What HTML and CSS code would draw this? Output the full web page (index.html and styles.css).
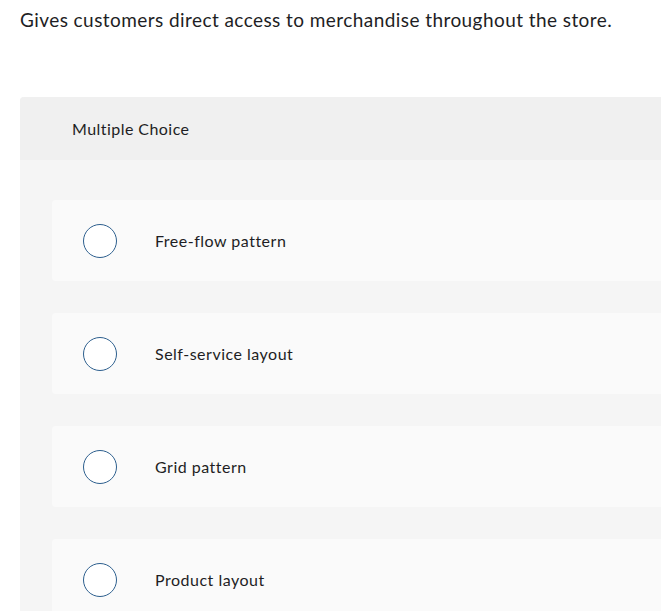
FILE: index.html
```html
<!DOCTYPE html>
<html>
<head>
<meta charset="utf-8">
<link rel="stylesheet" href="styles.css">
</head>
<body>
<p class="question">Gives customers direct access to merchandise throughout the store.</p>
<div class="panel">
  <div class="panel-head">Multiple Choice</div>
  <div class="panel-body">
    <div class="option"><span class="radio"></span><span class="label">Free-flow pattern</span></div>
    <div class="option"><span class="radio"></span><span class="label">Self-service layout</span></div>
    <div class="option"><span class="radio"></span><span class="label">Grid pattern</span></div>
    <div class="option"><span class="radio"></span><span class="label">Product layout</span></div>
  </div>
</div>
</body>
</html>
```
FILE: styles.css
```css
html, body {
  margin: 0;
  padding: 0;
  background: #ffffff;
  overflow: hidden;
}
body {
  font-family: Lato, "Open Sans", sans-serif;
  color: #1e1e24;
  width: 661px;
  height: 611px;
}
.question {
  margin: 0;
  padding: 8px 0 0 20px;
  font-size: 19px;
  line-height: 24px;
  letter-spacing: 0.43px;
  white-space: nowrap;
}
.panel {
  margin: 65px 0 0 20px;
  width: 700px;
  background: #f5f5f5;
  border-radius: 4px 4px 0 0;
}
.panel-head {
  height: 63px;
  display: flex;
  align-items: center;
  padding-left: 52px;
  background: #f0f0f0;
  font-size: 16px;
  letter-spacing: 0.45px;
  border-radius: 4px 4px 0 0;
}
.panel-body {
  padding: 40px 0 40px 32px;
  display: flex;
  flex-direction: column;
  gap: 32px;
}
.option {
  height: 81px;
  background: #fafafa;
  border-radius: 4px 0 0 4px;
  display: flex;
  align-items: center;
  padding-left: 31px;
}
.radio {
  width: 32px;
  height: 32px;
  border: 1.5px solid #2d5f8e;
  border-radius: 50%;
  background: #ffffff;
  flex: none;
}
.label {
  margin-left: 38px;
  font-size: 16px;
  letter-spacing: 0.5px;
}
```
